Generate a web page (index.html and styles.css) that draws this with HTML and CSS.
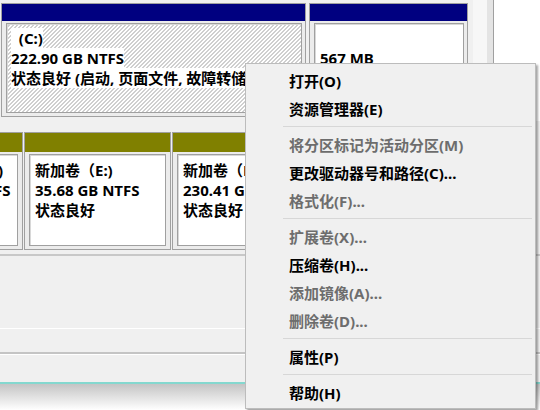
FILE: index.html
```html
<!DOCTYPE html>
<html lang="zh-CN">
<head>
<meta charset="utf-8">
<title>磁盘管理</title>
<link rel="stylesheet" href="styles.css">
</head>
<body>
<div class="disk disk0">
  <div class="part part-c">
    <div class="bar navy"></div>
    <div class="body">
      <div class="box hatch">
        <div class="line"><span class="txt">  (C:)</span></div>
        <div class="line"><span class="txt">222.90 GB NTFS</span></div>
        <div class="line"><span class="txt">状态良好 (启动, 页面文件, 故障转储, 基本数据分区)</span></div>
      </div>
    </div>
  </div>
  <div class="part part-r">
    <div class="bar navy"></div>
    <div class="body">
      <div class="box">
        <div class="line"></div>
        <div class="line">567 MB</div>
      </div>
    </div>
  </div>
  <div class="tail"></div>
  <div class="blank"></div>
</div>
<div class="disk disk1">
  <div class="part part-d">
    <div class="bar olive"></div>
    <div class="body">
      <div class="box box-right">
        <div class="line l1">新加卷（D:)</div>
        <div class="line l2">97.66 GB NTFS</div>
        <div class="line l3">状态良好</div>
      </div>
    </div>
  </div>
  <div class="part part-e">
    <div class="bar olive"></div>
    <div class="body">
      <div class="box">
        <div class="line">新加卷（E:)</div>
        <div class="line">35.68 GB NTFS</div>
        <div class="line">状态良好</div>
      </div>
    </div>
  </div>
  <div class="part part-f">
    <div class="bar olive"></div>
    <div class="body">
      <div class="box">
        <div class="line">新加卷（E:)</div>
        <div class="line">230.41 GB NTFS</div>
        <div class="line">状态良好</div>
      </div>
    </div>
  </div>
</div>
<div class="rule-a"></div>
<div class="pane pane1"></div>
<div class="pane pane2"></div>
<div class="pane pane3"></div>
<div class="teal"></div>
<div class="fade"></div>

<div class="menu">
  <div class="item">打开(O)</div>
  <div class="item">资源管理器(E)</div>
  <div class="sep"></div>
  <div class="item off">将分区标记为活动分区(M)</div>
  <div class="item">更改驱动器号和路径(C)...</div>
  <div class="item off">格式化(F)...</div>
  <div class="sep"></div>
  <div class="item off">扩展卷(X)...</div>
  <div class="item">压缩卷(H)...</div>
  <div class="item off">添加镜像(A)...</div>
  <div class="item off">删除卷(D)...</div>
  <div class="sep"></div>
  <div class="item">属性(P)</div>
  <div class="sep"></div>
  <div class="item">帮助(H)</div>
</div>
</body>
</html>
```
FILE: styles.css
```css
* { box-sizing: border-box; }
html, body { margin: 0; padding: 0; }
body {
  width: 540px;
  height: 410px;
  overflow: hidden;
  position: relative;
  background: #f0f0f0;
  font-family: "Noto Sans", "Noto Sans CJK SC", sans-serif;
  font-size: 15px;
  font-weight: 700;
  color: #000;
}

.disk { display: flex; align-items: stretch; }
.disk0 { height: 121px; padding-left: 1px; }
.disk1 { margin-left: -100px; padding-top: 11px; align-items: flex-start; }

.part {
  flex: none;
  align-self: flex-start;
  display: flex;
  flex-direction: column;
  border: 1px solid #a0a0a0;
  background: #ececec;
}
.disk0 .part { margin-top: 3px; }
.part-c { width: 305px; }
.part-r { width: 159px; margin-left: 3px; }
.part-d { width: 123px; }
.part-e { width: 147px; margin-left: 1px; }
.part-f { width: 300px; margin-left: 1px; }

.bar { height: 17px; }
.navy { background: #000080; }
.olive { background: #808000; height: 19px; }

.body { padding: 2px 3px 3px 4px; }
.disk1 .body { padding: 2px 4px 3px 4px; }

.box {
  height: 90px;
  border: 1px solid #a0a0a0;
  box-shadow: inset 1px 1px 0 #d8d8d8;
  background: #fff;
  padding: 4px 0 0 5px;
  overflow: hidden;
  white-space: nowrap;
}
.disk1 .box { height: 92px; padding-top: 5px; }

.hatch {
  background: repeating-linear-gradient(135deg, #ffffff 0 1.7px, #cfcfcf 1.7px 2.83px);
  padding-left: 4px;
}
.line { height: 20px; line-height: 20px; }
.txt { display: inline-block; background: #fff; white-space: pre; height: 20px; }

.box-right { text-align: right; padding: 5px 0 0 0; }
.box-right .l1 { padding-right: 14px; }
.box-right .l2 { padding-right: 12px; }
.box-right .l3 { padding-right: 60px; }

.tail {
  flex: none;
  width: 26px;
  background: linear-gradient(to right, #f0f0f0 0 5px, #f7f7f7 5px 19px, #e4e4e4 19px 24px);
  border-right: 1px solid #a0a0a0;
}
.blank { flex: 1; background: #fff; }

.rule-a { margin-top: 4px; height: 2px; background: #c8c8c8; }
.pane { background: #f0f0f0; }
.pane1 { height: 73px; border-bottom: 1px solid #ffffff; }
.pane2 { height: 25px; border-bottom: 2px solid #c4c4c4; }
.pane3 { height: 28px; border-top: 1px solid #ffffff; }
.teal { height: 2px; background: #84d8cf; }
.fade { height: 26px; background: linear-gradient(#c4c4c4, #ffffff); }

.menu {
  position: absolute;
  left: 245px;
  top: 63px;
  width: 291px;
  background: #f0f0f0;
  border: 1px solid #bcbcbc;
  box-shadow: 2px 2px 2px rgba(0, 0, 0, 0.35);
  padding: 3px 0 1px;
}
.item {
  height: 28px;
  line-height: 28px;
  padding-left: 43px;
  white-space: nowrap;
}
.item.off { color: #6d6d6d; }
.sep {
  height: 1px;
  margin: 3px 3px 4px 37px;
  background: #d7d7d7;
}
```
